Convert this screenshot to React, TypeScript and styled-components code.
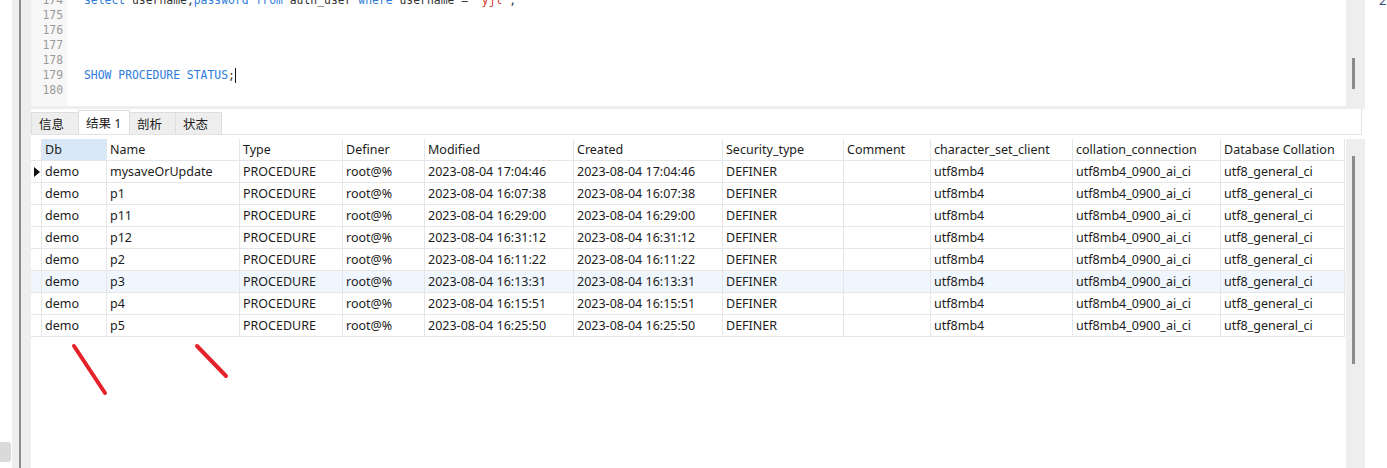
import React from 'react';
import styled, { createGlobalStyle } from 'styled-components';

const GlobalStyle = createGlobalStyle`
  html, body {
    margin: 0;
    padding: 0;
    background: #fff;
    overflow: hidden;
  }
`;

const uiFont = `"Noto Sans", "Noto Sans CJK SC", sans-serif`;
const monoFont = `"DejaVu Sans Mono", "Liberation Mono", monospace`;

const Screen = styled.div`
  position: relative;
  display: flex;
  width: 1387px;
  height: 468px;
  overflow: hidden;
  background: #fff;
`;

const LeftEdge = styled.div`
  width: 12px;
  display: flex;
  flex-direction: column;
  justify-content: flex-end;
  padding-bottom: 6px;
  box-sizing: border-box;
`;

const EdgeKnob = styled.div`
  width: 11px;
  height: 20px;
  background: #dadada;
  border-radius: 0 3px 3px 0;
`;

const Splitter = styled.div`
  width: 19px;
  background: linear-gradient(to right, #eeeeee 7px, #8c8c8c 7px, #8c8c8c 9px, #eeeeee 9px);
`;

const MainColumn = styled.div`
  width: 1334px;
  display: flex;
  flex-direction: column;
`;

const Editor = styled.div`
  height: 106px;
  display: flex;
  overflow: hidden;
`;

const Gutter = styled.div`
  width: 36px;
  background: #f7f7f7;
  padding-right: 4px;
  box-sizing: border-box;
  text-align: right;
  font-family: ${monoFont};
  font-size: 11.4px;
  color: #9a9a9a;
`;

const CodeArea = styled.div`
  flex: 1;
  padding-left: 17px;
  font-family: ${monoFont};
  font-size: 11.4px;
  color: #333;
  white-space: pre;
`;

// first visible line (174) is scrolled half out of view
const Lines = styled.div`
  margin-top: -7px;
`;

const Line = styled.div`
  height: 15px;
  line-height: 15px;
`;

const Kw = styled.span`
  color: #2f7bdc;
`;

const Str = styled.span`
  color: #d3362d;
`;

const Caret = styled.span`
  display: inline-block;
  width: 1px;
  height: 15px;
  background: #111;
  vertical-align: top;
`;

const ScrollTrack = styled.div<{ $thumbTop: number; $thumbHeight: number }>`
  width: 19px;
  flex-shrink: 0;
  background: #eeeeee;
  padding-top: ${({ $thumbTop }) => $thumbTop}px;
  box-sizing: border-box;

  &::before {
    content: '';
    display: block;
    width: 3px;
    height: ${({ $thumbHeight }) => $thumbHeight}px;
    margin-left: 6px;
    background: #8b8b8b;
  }
`;

const Separator = styled.div`
  height: 3px;
  background: #eeeeee;
`;

const ResultPanel = styled.div`
  flex: 1;
  display: flex;
  flex-direction: column;
  background: #fff;
  min-height: 0;
`;

const TabBar = styled.div`
  height: 25px;
  display: flex;
  align-items: flex-end;
  border-bottom: 1px solid #e3e3e3;
  border-right: 1px solid #e3e3e3;
  margin-right: 3px;
`;

const Tab = styled.div<{ $active?: boolean; $w: number }>`
  width: ${({ $w }) => $w}px;
  height: ${({ $active }) => ($active ? 24 : 22)}px;
  box-sizing: border-box;
  padding-left: 7px;
  display: flex;
  align-items: center;
  background: ${({ $active }) => ($active ? '#ffffff' : '#eeeeee')};
  border: 1px solid #dedede;
  border-bottom: none;
  margin-right: -1px;
  font-family: ${uiFont};
  font-size: 12.5px;
  color: #1a1a1a;
`;

const GridArea = styled.div`
  flex: 1;
  display: flex;
  padding-top: 4px;
  min-height: 0;
`;

const Table = styled.div`
  flex: 1;
  font-family: ${uiFont};
  font-size: 12.5px;
  color: #1c1c1c;
`;

const colWidths = [11, 65, 133, 103, 82, 149, 149, 121, 87, 142, 148, 124];
const template = colWidths.map((w) => `${w}px`).join(' ');

const Row = styled.div<{ $hover?: boolean }>`
  display: grid;
  grid-template-columns: ${template};
  height: 22px;
  background: ${({ $hover }) => ($hover ? '#f0f6fd' : 'transparent')};
`;

const Cell = styled.div<{ $selected?: boolean }>`
  box-sizing: border-box;
  height: 22px;
  line-height: 21px;
  padding: 0 3px;
  border-right: 1px solid #e6e6e6;
  border-bottom: 1px solid #e6e6e6;
  white-space: nowrap;
  overflow: hidden;
  background: ${({ $selected }) => ($selected ? '#d9e8f6' : 'transparent')};
`;

const RowHead = styled(Cell)`
  padding: 0 0 0 1px;
  display: flex;
  align-items: center;
  justify-content: center;
`;

const RightStrip = styled.div`
  width: 22px;
  position: relative;
`;

const EdgeGlyph = styled.span`
  display: block;
  margin: -9px 0 0 14px;
  font-family: ${uiFont};
  font-size: 13px;
  color: #3a4a7a;
`;

const Marks = styled.svg`
  position: absolute;
  left: 0;
  top: 0;
  pointer-events: none;
`;

const headers = [
  'Db', 'Name', 'Type', 'Definer', 'Modified', 'Created', 'Security_type',
  'Comment', 'character_set_client', 'collation_connection', 'Database Collation',
];

const procs: [string, string][] = [
  ['mysaveOrUpdate', '17:04:46'],
  ['p1', '16:07:38'],
  ['p11', '16:29:00'],
  ['p12', '16:31:12'],
  ['p2', '16:11:22'],
  ['p3', '16:13:31'],
  ['p4', '16:15:51'],
  ['p5', '16:25:50'],
];

const Pointer = () => (
  <svg width="6" height="10" viewBox="0 0 6 10">
    <path d="M0 0 L6 5 L0 10 Z" fill="#111" />
  </svg>
);

const App: React.FC = () => {
  return (
    <Screen>
      <GlobalStyle />
      <LeftEdge>
        <EdgeKnob />
      </LeftEdge>
      <Splitter />
      <MainColumn>
        <Editor>
          <Gutter>
            <Lines>
              {[174, 175, 176, 177, 178, 179, 180].map((n) => (
                <Line key={n}>{n}</Line>
              ))}
            </Lines>
          </Gutter>
          <CodeArea>
            <Lines>
              <Line>
                <Kw>select</Kw> username,<Kw>password</Kw> <Kw>from</Kw> auth_user <Kw>where</Kw> username = <Str>'yjl'</Str>;
              </Line>
              <Line />
              <Line />
              <Line />
              <Line />
              <Line>
                <Kw>SHOW PROCEDURE STATUS</Kw>;<Caret />
              </Line>
              <Line />
            </Lines>
          </CodeArea>
          <ScrollTrack $thumbTop={58} $thumbHeight={31} />
        </Editor>
        <Separator />
        <ResultPanel>
          <TabBar>
            <Tab $w={48}>信息</Tab>
            <Tab $w={52} $active>结果 1</Tab>
            <Tab $w={47}>剖析</Tab>
            <Tab $w={47}>状态</Tab>
          </TabBar>
          <GridArea>
            <Table>
              <Row>
                <RowHead />
                {headers.map((h, i) => (
                  <Cell key={h} $selected={i === 0}>{h}</Cell>
                ))}
              </Row>
              {procs.map(([name, time], i) => (
                <Row key={name} $hover={name === 'p3'}>
                  <RowHead>{i === 0 && <Pointer />}</RowHead>
                  <Cell>demo</Cell>
                  <Cell>{name}</Cell>
                  <Cell>PROCEDURE</Cell>
                  <Cell>root@%</Cell>
                  <Cell>2023-08-04 {time}</Cell>
                  <Cell>2023-08-04 {time}</Cell>
                  <Cell>DEFINER</Cell>
                  <Cell />
                  <Cell>utf8mb4</Cell>
                  <Cell>utf8mb4_0900_ai_ci</Cell>
                  <Cell>utf8_general_ci</Cell>
                </Row>
              ))}
            </Table>
            <ScrollTrack $thumbTop={17} $thumbHeight={208} />
          </GridArea>
        </ResultPanel>
      </MainColumn>
      <RightStrip>
        <EdgeGlyph>2</EdgeGlyph>
      </RightStrip>
      <Marks width="1387" height="468">
        <g stroke="#e5212a" strokeWidth="4" strokeLinecap="round">
          <line x1="74" y1="346" x2="105" y2="393" />
          <line x1="197" y1="346" x2="226" y2="376" />
        </g>
      </Marks>
    </Screen>
  );
};

export default App;
